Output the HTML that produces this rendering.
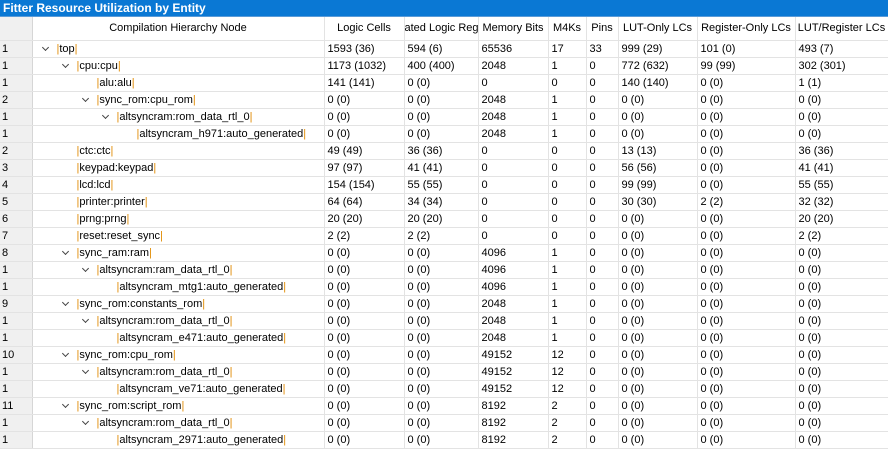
<!DOCTYPE html>
<html><head><meta charset="utf-8">
<style>
*{margin:0;padding:0;box-sizing:border-box}
body{width:888px;height:448px;overflow:hidden;background:#fff;font-family:"Liberation Sans",Arial,sans-serif;font-size:11px;color:#000}
.title{height:17px;background:#0a78d4;color:#fff;font-weight:bold;font-size:12px;line-height:17px;padding-left:3px;border-bottom:1px solid #5a9bd8}
table{border-collapse:collapse;table-layout:fixed;width:888px}
td,th{height:17px;border-right:1px solid #e3e3e3;border-bottom:1px solid #e3e3e3;white-space:nowrap;overflow:hidden;padding:0 0 0 3px;font-weight:normal;text-align:left;line-height:16px}
th{height:23px;text-align:center;padding:0}
td.i{background:#f0f0f0;padding-left:2px;border-right:1px solid #d6d6d6}
th.i{background:#f0f0f0;border-right:1px solid #d6d6d6}
td.n{position:relative}
.p{color:#e08a00}
.c{position:absolute;top:4px;width:5px;height:5px;border-right:1.2px solid #444;border-bottom:1.2px solid #444;transform:rotate(45deg)}
</style></head><body>
<div class="title">Fitter Resource Utilization by Entity</div>
<table>
<colgroup><col style="width:32px"><col style="width:292px"><col style="width:80px"><col style="width:74px"><col style="width:70px"><col style="width:38px"><col style="width:32px"><col style="width:79px"><col style="width:98px"><col style="width:93px"></colgroup>
<tr><th class="i"></th><th>Compilation Hierarchy Node</th><th>Logic Cells</th><th style="text-align:left">ated Logic Reg</th><th>Memory Bits</th><th>M4Ks</th><th>Pins</th><th>LUT-Only LCs</th><th>Register-Only LCs</th><th>LUT/Register LCs</th></tr>
<tbody id="b"></tbody>
</table>
<script>
var R=[
[1,0,1,"top","1593 (36)","594 (6)","65536","17","33","999 (29)","101 (0)","493 (7)"],
[1,1,1,"cpu:cpu","1173 (1032)","400 (400)","2048","1","0","772 (632)","99 (99)","302 (301)"],
[1,2,0,"alu:alu","141 (141)","0 (0)","0","0","0","140 (140)","0 (0)","1 (1)"],
[2,2,1,"sync_rom:cpu_rom","0 (0)","0 (0)","2048","1","0","0 (0)","0 (0)","0 (0)"],
[1,3,1,"altsyncram:rom_data_rtl_0","0 (0)","0 (0)","2048","1","0","0 (0)","0 (0)","0 (0)"],
[1,4,0,"altsyncram_h971:auto_generated","0 (0)","0 (0)","2048","1","0","0 (0)","0 (0)","0 (0)"],
[2,1,0,"ctc:ctc","49 (49)","36 (36)","0","0","0","13 (13)","0 (0)","36 (36)"],
[3,1,0,"keypad:keypad","97 (97)","41 (41)","0","0","0","56 (56)","0 (0)","41 (41)"],
[4,1,0,"lcd:lcd","154 (154)","55 (55)","0","0","0","99 (99)","0 (0)","55 (55)"],
[5,1,0,"printer:printer","64 (64)","34 (34)","0","0","0","30 (30)","2 (2)","32 (32)"],
[6,1,0,"prng:prng","20 (20)","20 (20)","0","0","0","0 (0)","0 (0)","20 (20)"],
[7,1,0,"reset:reset_sync","2 (2)","2 (2)","0","0","0","0 (0)","0 (0)","2 (2)"],
[8,1,1,"sync_ram:ram","0 (0)","0 (0)","4096","1","0","0 (0)","0 (0)","0 (0)"],
[1,2,1,"altsyncram:ram_data_rtl_0","0 (0)","0 (0)","4096","1","0","0 (0)","0 (0)","0 (0)"],
[1,3,0,"altsyncram_mtg1:auto_generated","0 (0)","0 (0)","4096","1","0","0 (0)","0 (0)","0 (0)"],
[9,1,1,"sync_rom:constants_rom","0 (0)","0 (0)","2048","1","0","0 (0)","0 (0)","0 (0)"],
[1,2,1,"altsyncram:rom_data_rtl_0","0 (0)","0 (0)","2048","1","0","0 (0)","0 (0)","0 (0)"],
[1,3,0,"altsyncram_e471:auto_generated","0 (0)","0 (0)","2048","1","0","0 (0)","0 (0)","0 (0)"],
[10,1,1,"sync_rom:cpu_rom","0 (0)","0 (0)","49152","12","0","0 (0)","0 (0)","0 (0)"],
[1,2,1,"altsyncram:rom_data_rtl_0","0 (0)","0 (0)","49152","12","0","0 (0)","0 (0)","0 (0)"],
[1,3,0,"altsyncram_ve71:auto_generated","0 (0)","0 (0)","49152","12","0","0 (0)","0 (0)","0 (0)"],
[11,1,1,"sync_rom:script_rom","0 (0)","0 (0)","8192","2","0","0 (0)","0 (0)","0 (0)"],
[1,2,1,"altsyncram:rom_data_rtl_0","0 (0)","0 (0)","8192","2","0","0 (0)","0 (0)","0 (0)"],
[1,3,0,"altsyncram_2971:auto_generated","0 (0)","0 (0)","8192","2","0","0 (0)","0 (0)","0 (0)"]
];
var h="";
R.forEach(function(r){
 var x=24+20*r[1];
 h+='<tr><td class="i">'+r[0]+'</td><td class="n" style="padding-left:'+x+'px">'+(r[2]?'<span class="c" style="left:'+(x-14)+'px"></span>':'')+'<span class="p">|</span>'+r[3]+'<span class="p">|</span></td>';
 for(var k=4;k<12;k++)h+='<td>'+r[k]+'</td>';
 h+='</tr>';
});
document.getElementById("b").innerHTML=h;
</script>
</body></html>
